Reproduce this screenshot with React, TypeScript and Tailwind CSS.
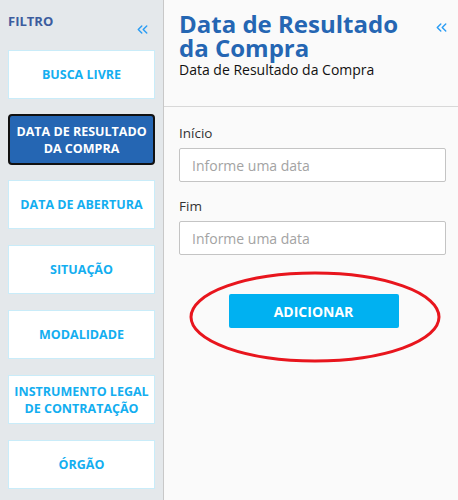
import { ChevronsLeft } from 'lucide-react'

const FILTERS = [
  'BUSCA LIVRE',
  'DATA DE RESULTADO DA COMPRA',
  'DATA DE ABERTURA',
  'SITUAÇÃO',
  'MODALIDADE',
  'INSTRUMENTO LEGAL DE CONTRATAÇÃO',
  'ÓRGÃO',
]

function FilterButton({ label, active }: { label: string; active?: boolean }) {
  return (
    <button
      className={
        active
          ? 'w-[147px] h-[51px] rounded border-2 border-[#111] bg-[#2566b3] text-white text-[12.5px] font-bold leading-[17px] px-1'
          : 'w-[147px] h-[49px] border border-[#c9ecf9] bg-white text-[#13aef0] text-[12.5px] font-bold leading-[17px] px-1'
      }
    >
      {label}
    </button>
  )
}

function Sidebar() {
  return (
    <aside className="w-[164px] shrink-0 bg-[#e4e8eb] border-r border-[#c8c8c8] min-h-[500px] px-2 pt-[12px]">
      <div className="flex items-start justify-between">
        <span className="text-[13px] font-bold text-[#3b5c9e] leading-4 mt-[1px]">FILTRO</span>
        <ChevronsLeft className="w-[17px] h-[17px] mt-[9px] mr-[4px] text-[#2a9df4]" strokeWidth={2} />
      </div>
      <div className="mt-[12px] flex flex-col gap-[16px]">
        {FILTERS.map(f => (
          <div key={f} className={f === 'DATA DE RESULTADO DA COMPRA' ? '-my-[1px]' : ''}>
            <FilterButton label={f} active={f === 'DATA DE RESULTADO DA COMPRA'} />
          </div>
        ))}
      </div>
    </aside>
  )
}

function DateField({ label }: { label: string }) {
  return (
    <div>
      <label className="block text-[13.5px] text-[#333] leading-4 mb-[7px]">{label}</label>
      <input
        type="text"
        placeholder="Informe uma data"
        className="w-full h-[34px] bg-white border border-[#c4c4c4] rounded-[2px] px-3 text-[14px] text-[#333] placeholder-[#a3a3a3] focus:outline-none"
      />
    </div>
  )
}

export default function App() {
  return (
    <div className="w-[458px] h-[500px] flex overflow-hidden font-['Open_Sans',sans-serif] bg-[#fafafa]">
      <Sidebar />
      <main className="flex-1 relative">
        <div className="h-[107px] border-b border-[#d8d8d8] pl-[15px] pr-2 pt-[12px] flex justify-between">
          <div>
            <h1 className="text-[24px] font-bold text-[#2566b3] leading-[24px]">
              Data de Resultado<br />da Compra
            </h1>
            <p className="text-[14px] text-[#111] leading-4 mt-[2px]">Data de Resultado da Compra</p>
          </div>
          <ChevronsLeft className="w-[17px] h-[17px] mt-[7px] text-[#2a9df4]" strokeWidth={2} />
        </div>
        <div className="pl-[15px] pr-[12px] pt-[18px] flex flex-col gap-[16px]">
          <DateField label="Início" />
          <DateField label="Fim" />
        </div>
        <div className="flex justify-center mt-[39px] pl-[5px]">
          <button className="w-[170px] h-[34px] bg-[#00b1f1] rounded-[2px] text-white text-[14px] font-bold">
            ADICIONAR
          </button>
        </div>
        <svg className="absolute left-[24px] top-[271px]" width="254" height="94" viewBox="0 0 254 94">
          <ellipse cx="127" cy="46" rx="124" ry="44" fill="none" stroke="#e8151d" strokeWidth="3" />
        </svg>
      </main>
    </div>
  )
}
